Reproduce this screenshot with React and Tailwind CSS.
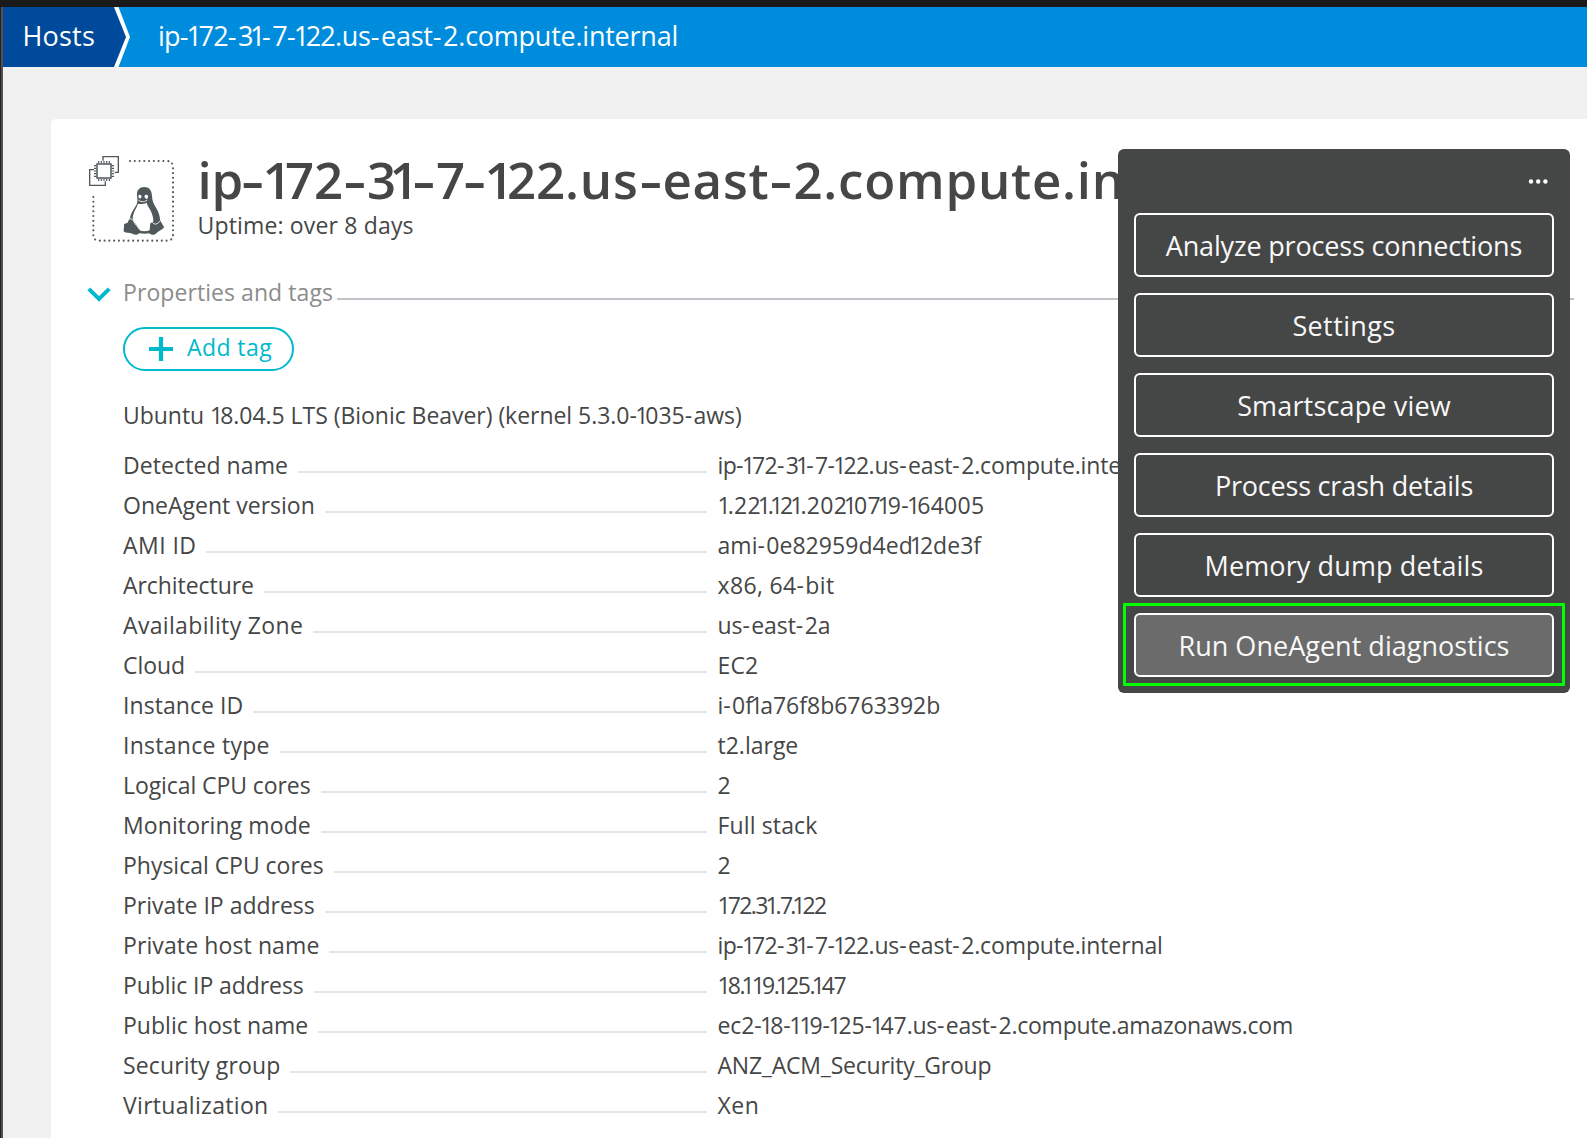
import React from "react";

const BUTTONS = [
  ["Analyze process connections", "tracking-[-0.17px]"],
  ["Settings", "tracking-[0.39px]"],
  ["Smartscape view", "tracking-[0.16px]"],
  ["Process crash details", "tracking-[-0.21px]"],
  ["Memory dump details", "tracking-[0.12px]"],
];

const IP = [
  ["ip-172-31-7-122", "tracking-[-0.65px]"],
  [".us-east-2.compute.internal", "tracking-[-0.12px]"],
];

const ROWS = [
  ["Detected name", "tracking-[0.08px]", IP],
  ["OneAgent version", "tracking-[0.01px]", [["1.221.121.20210719-164005", "tracking-[0.3px]"]]],
  ["AMI ID", "tracking-[0.45px]", [["ami-0e82959d4ed12de3f", "tracking-[0.04px]"]]],
  ["Architecture", "tracking-[-0.06px]", [["x86, 64-bit", "tracking-[0.35px]"]]],
  ["Availability Zone", "tracking-[0.34px]", [["us-east-2a", "tracking-[-0.06px]"]]],
  ["Cloud", "tracking-[-0.06px]", [["EC2", "tracking-[0.1px]"]]],
  ["Instance ID", "tracking-[0.06px]", [["i-0f1a76f8b6763392b", "tracking-normal"]]],
  ["Instance type", "tracking-[0.27px]", [["t2.large", "tracking-normal"]]],
  ["Logical CPU cores", "tracking-[-0.08px]", [["2", "tracking-normal"]]],
  ["Monitoring mode", "tracking-[0.1px]", [["Full stack", "tracking-[0.14px]"]]],
  ["Physical CPU cores", "tracking-[-0.02px]", [["2", "tracking-normal"]]],
  ["Private IP address", "tracking-normal", [["172.31.7.122", "tracking-[-1.6px]"]]],
  ["Private host name", "tracking-[0.11px]", IP],
  ["Public IP address", "tracking-[-0.08px]", [["18.119.125.147", "tracking-[-1.4px]"]]],
  ["Public host name", "tracking-[0.03px]", [
    ["ec2-18-119-125-147", "tracking-[-0.1px]"],
    [".us-east-2.compute.amazonaws.com", "tracking-[-0.24px]"],
  ]],
  ["Security group", "tracking-[0.14px]", [["ANZ_ACM_Security_Group", "tracking-[-0.22px]"]]],
  ["Virtualization", "tracking-[0.31px]", [["Xen", "tracking-[0.5px]"]]],
];

const KERNING = {
  plain: "",
  tight: "tracking-[-0.13em]",
  dot: "tracking-[-0.17em]",
  hyphen: "tracking-[0.06em]",
  hyphenTight: "tracking-[-0.07em]",
  wide: "inline-block w-[0.47em] scale-x-[1.39] text-center tracking-normal",
  wideTight: "inline-block w-[0.38em] scale-x-[1.39] text-center tracking-normal",
};

function kerningOf(char, next, wide) {
  const tight = next === "1";
  if (char === "-") {
    if (wide) return tight ? "wideTight" : "wide";
    return tight ? "hyphenTight" : "hyphen";
  }
  if (char === "." && tight) return "dot";
  if (char === "1" || (tight && char !== " ") || (char === "7" && next === ".")) return "tight";
  return "plain";
}

/* Kerns the narrow digit one and the long hyphens of technical strings. */
function Tech({ text, className = "", wide = false }) {
  const runs = [];
  for (let i = 0; i < text.length; i++) {
    const kind = kerningOf(text[i], text[i + 1], wide);
    const last = runs[runs.length - 1];
    if (last && last.kind === kind) last.text += text[i];
    else runs.push({ kind, text: text[i] });
  }
  return (
    <span className={className}>
      {runs.map((run, i) => run.kind === "plain" ? run.text : <span key={i} className={KERNING[run.kind]}>{run.text}</span>)}
    </span>
  );
}

function HostIcon() {
  return (
    <svg className="h-[110px] w-[116px] shrink-0" viewBox="0 0 348 330" fill="none">
      <g stroke="#50585b">
        <path d="M150 63H260Q279 63 279 82V284Q279 302 261 302H58Q40 302 40 284V168" strokeWidth="6.4" strokeLinecap="round" strokeDasharray="0 14.3" />
        <path d="M69 62V50H115V97H104M42 89H29V136H76V124" strokeWidth="4" />
        <rect x="51" y="72" width="42" height="42" strokeWidth="4.5" />
        <path d="M56 70v-7M64 70v-7M72 70v-7M80 70v-7M88 70v-7M56 123v-7M64 123v-7M72 123v-7M80 123v-7M88 123v-7M42 77h7M42 85h7M42 93h7M42 101h7M42 109h7M95 77h7M95 85h7M95 93h7M95 101h7M95 109h7" strokeWidth="3.5" />
      </g>
      <path fill="#50585b" d="M171 166C170 150 179 141 193 141C207 141 215 151 216 167C216 181 221 192 229 205C236 217 240 228 240 241L252 261C252 266 238 271 229 280C222 287 212 285 208 280C200 282 188 282 178 280C174 285 165 285 157 281C149 277 137 279 132 275C129 270 133 263 132 256C131 251 138 250 142 249C146 244 146 238 150 234C152 220 162 207 169 195C174 187 172 177 171 166Z" />
      <path fill="#fff" d="M174 191C181 193 190 193 200 188C202 198 211 207 215 219C219 230 221 239 219 247C213 246 210 251 210 258L209 271C200 274 188 275 179 271C178 263 169 255 161 242C158 237 157 232 160 224C162 213 171 202 174 191Z" />
      <path fill="#fff" d="M176 166C179 163 184 165 185 171L180 176C176 175 174 170 176 166ZM193 170C194 163 203 163 204 169C205 174 202 177 198 177Z" />
      <path d="M175 180C181 185 191 188 202 180" stroke="#fff" strokeWidth="2.5" />
      <path d="M147 239C153 232 158 239 162 246C167 255 174 259 176 266" stroke="#fff" strokeWidth="3" />
      <path d="M218 247C221 255 234 254 239 243" stroke="#fff" strokeWidth="2.5" />
    </svg>
  );
}

function Menu() {
  return (
    <div className="absolute left-[1118px] top-[149px] flex h-[544px] w-[452px] flex-col rounded-[6px] bg-[#454646] px-4 text-[27px] text-[#f8f8f8]">
      <div className="flex h-16 items-center justify-end pr-[6px]">
        <svg className="h-[5px] w-5" viewBox="0 0 20 5" fill="#fff">
          <circle cx="3" cy="2.5" r="2.2" />
          <circle cx="10.2" cy="2.5" r="2.2" />
          <circle cx="17.4" cy="2.5" r="2.2" />
        </svg>
      </div>
      <div className="flex flex-col gap-4">
        {BUTTONS.map(([label, tracking]) => (
          <button key={label} className="h-16 rounded-[6px] border-2 border-white pt-px leading-[59px]">
            <span className={tracking}>{label}</span>
          </button>
        ))}
        <button className="relative h-16 rounded-[6px] border-2 border-white bg-[#6a6b6a] pt-px leading-[59px]">
          <span className="tracking-[0.02px]">Run OneAgent diagnostics</span>
          <span className="absolute -left-[13px] -top-[12px] h-[83px] w-[442px] rounded-[1px] border-[3px] border-[#00ff00]" />
        </button>
      </div>
    </div>
  );
}

export default function App() {
  return (
    <div className="relative flex h-[1138px] w-[1587px] flex-col overflow-hidden bg-[#f1f1f1] font-['Open_Sans','Noto_Sans',sans-serif] text-[23px] text-[#454646]">
      <div className="h-[7px] shrink-0 bg-[#1a1a1a]" />
      <div className="flex min-h-0 grow">
        <div className="w-[3px] shrink-0 border-l border-[#222222] bg-[#525252]" />
        <div className="flex min-w-0 grow flex-col">
          <nav className="flex h-[60px] shrink-0 whitespace-nowrap bg-[#008cdd] text-[27px] leading-[57px] text-white">
            <div className="w-[111px] bg-[#004a9b] pl-[19.5px] tracking-[0.2px]">Hosts</div>
            <svg className="h-[60px] w-4 shrink-0" viewBox="0 0 16 60">
              <path d="M0 0H1L14 30L1 60H0Z" fill="#004a9b" />
              <path d="M0 0H4.5L16 30L4.5 60H0L12 30Z" fill="#fff" />
            </svg>
            <div className="pl-[28px]">
              <Tech text="ip-172-31-7-122" className="tracking-[-0.8px]" />
              <Tech text=".us-east-2.compute.internal" className="tracking-[-0.24px]" />
            </div>
          </nav>

          <main className="ml-12 mt-[52px] grow rounded-tl-[5px] bg-white">
            <header className="flex h-[158px] whitespace-nowrap">
              <div className="ml-[29px] mt-[21px]"><HostIcon /></div>
              <div className="pl-[1.5px] pt-[30px]">
                <h1 className="text-[51px] font-semibold leading-[60px]">
                  <Tech text="ip-172-31-7-122" wide className="tracking-[-0.15px]" />
                  <Tech text=".us-east-2.compute.internal" wide className="tracking-[0.75px]" />
                </h1>
                <p className="mt-px leading-[30px] tracking-[0.16px]">Uptime: over 8 days</p>
              </div>
            </header>

            <div className="flex h-[30px] leading-[30px] text-[#8c8c8c]">
              <svg className="ml-9 mt-2.5 h-4 w-6" viewBox="0 0 24 16" fill="none">
                <path d="M1.8 1.8L12 12L22.2 1.8" stroke="#00b9cc" strokeWidth="4" />
              </svg>
              <span className="ml-[12px] tracking-[0.07px]">Properties and tags</span>
              <span className="ml-[4px] mr-[13px] mt-[21px] h-0.5 grow bg-[#c3c2c9]" />
            </div>

            <div className="pl-[72px]">
              <button className="mt-5 flex h-11 w-[171px] items-center rounded-full border-2 border-[#00b9cc] pl-6 text-[#00b9cc]">
                <svg className="h-6 w-6" viewBox="0 0 24 24">
                  <path d="M12 0V24M0 12H24" stroke="#00b9cc" strokeWidth="4.2" />
                </svg>
                <span className="ml-[14px] pb-[3px] tracking-[0.42px]">Add tag</span>
              </button>
              <p className="mt-[29px] whitespace-nowrap leading-[30px]">
                <Tech text="Ubuntu 18.04.5 LTS (Bionic Beaver) (kernel 5.3.0-1035-aws)" className="tracking-[-0.04px]" />
              </p>
              <dl className="mt-[15px]">
                {ROWS.map(([label, tracking, value]) => (
                  <div key={label} className="flex h-10 whitespace-nowrap leading-[40px]">
                    <dt className="flex w-[584px] shrink-0">
                      <span className={tracking}>{label}</span>
                      <span className="ml-[10px] mt-[26px] h-0.5 grow bg-[#e5e5e5]" />
                    </dt>
                    <dd className="ml-[10.5px]">
                      {value.map(([text, spacing]) => <Tech key={text} text={text} className={spacing} />)}
                    </dd>
                  </div>
                ))}
              </dl>
            </div>
          </main>
        </div>
      </div>
      <Menu />
    </div>
  );
}
